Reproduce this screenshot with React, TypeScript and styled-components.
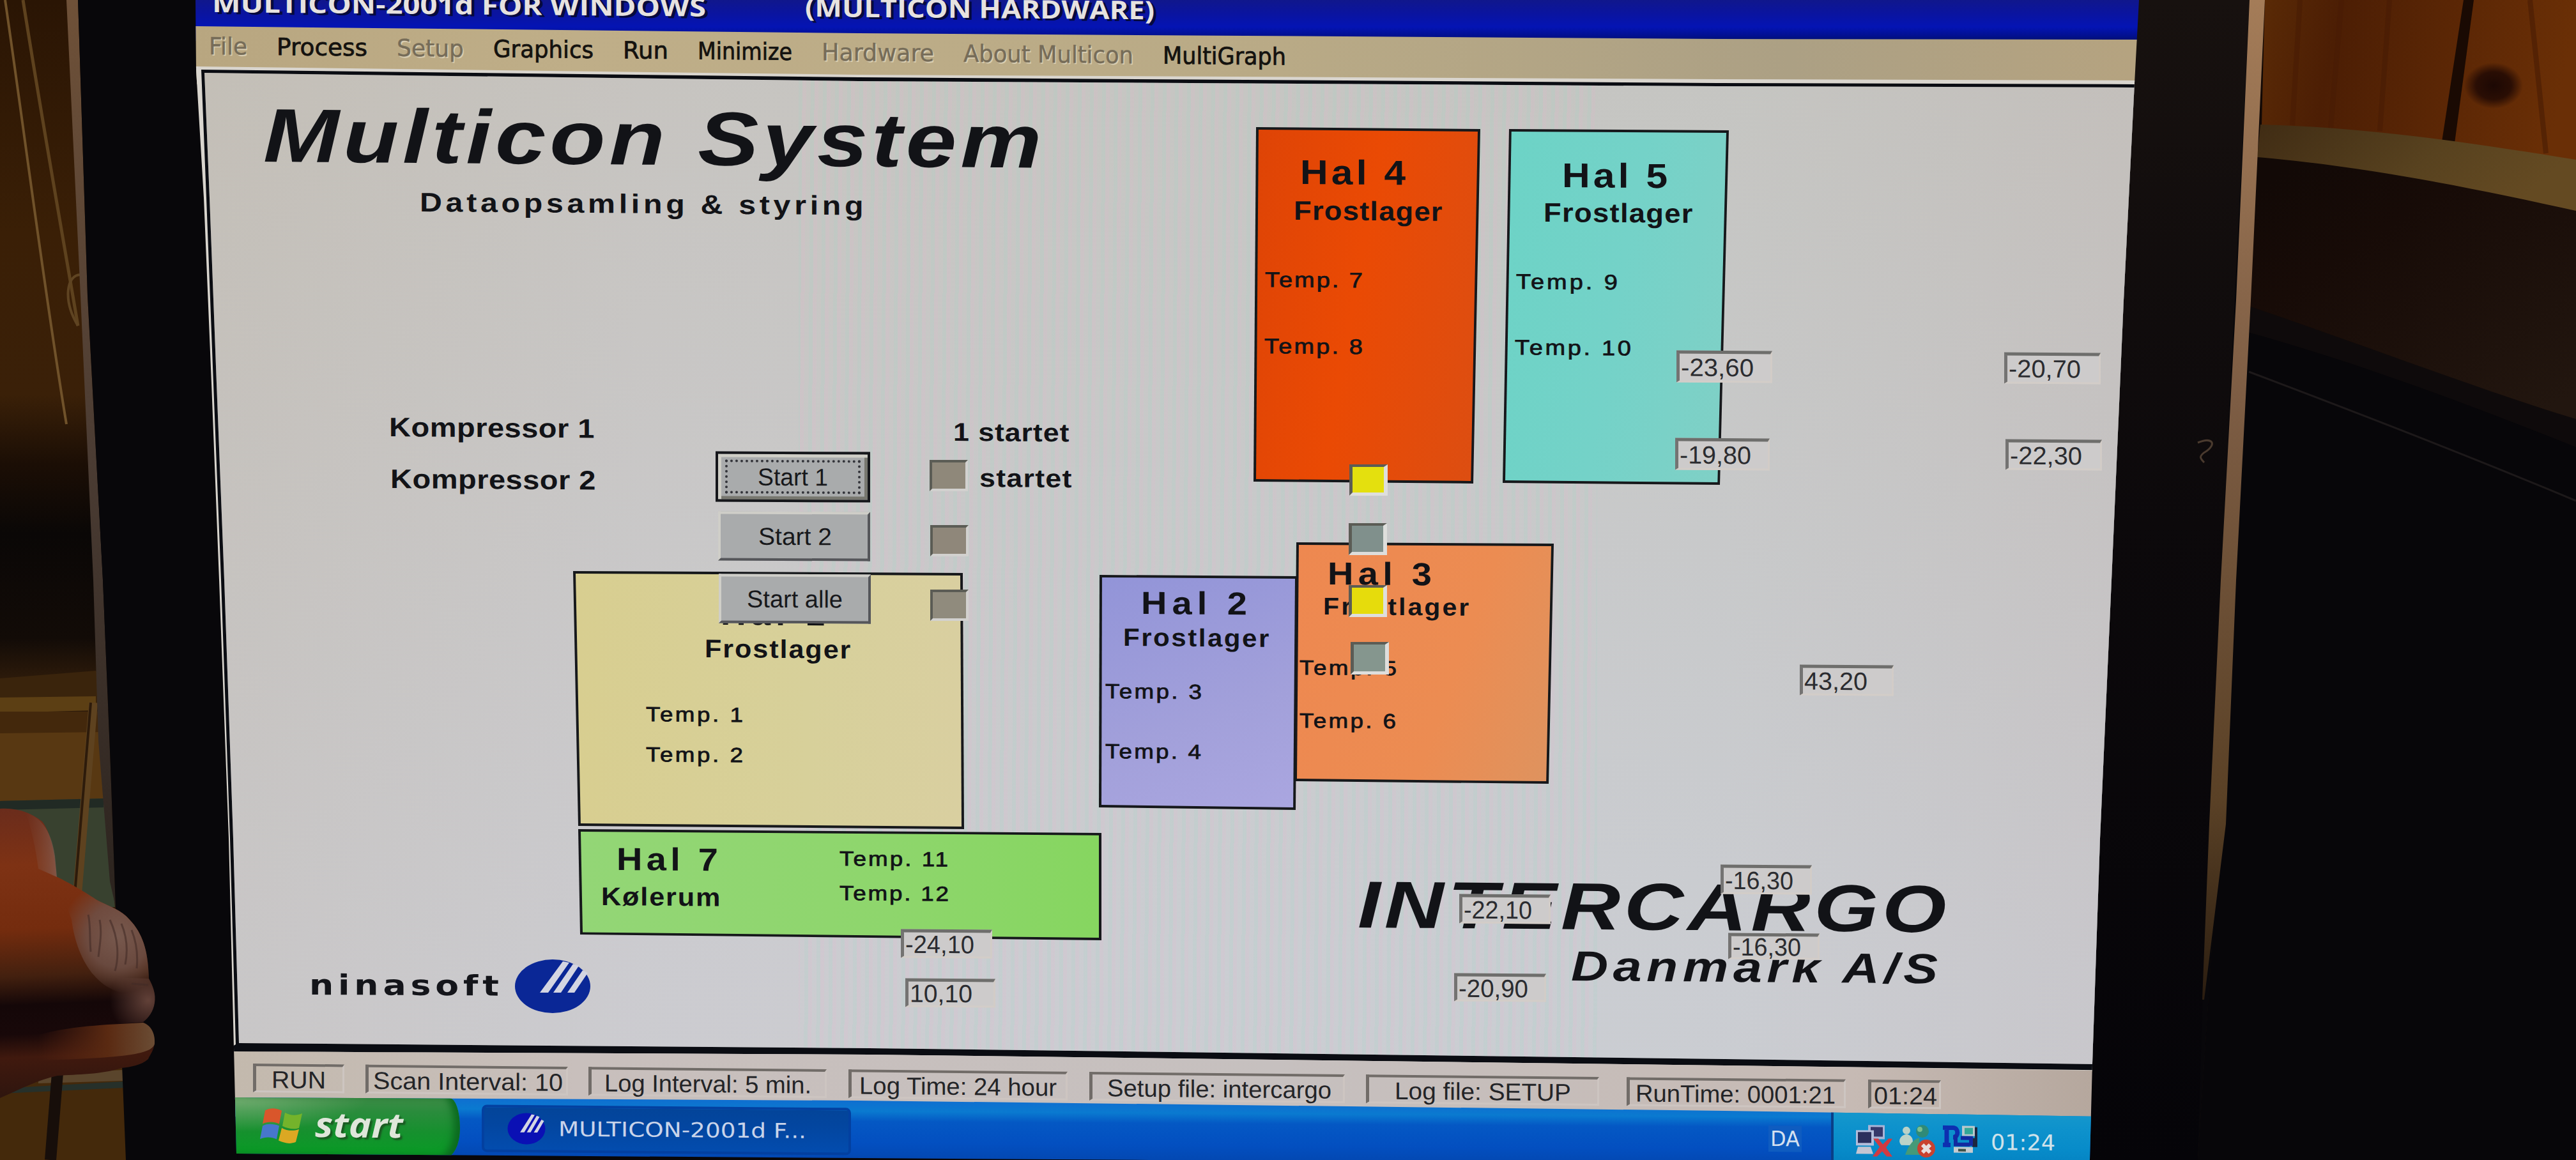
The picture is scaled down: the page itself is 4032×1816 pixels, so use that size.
import React, { useLayoutEffect, useRef, useState } from "react";
import styled, { createGlobalStyle, css } from "styled-components";

const TOP = 100;
const SANS = `"Liberation Sans", Arial, sans-serif`;
const UI = `"DejaVu Sans", Tahoma, sans-serif`;

const GlobalStyle = createGlobalStyle`
  html, body { margin: 0; padding: 0; background: #07060a; overflow: hidden; }
  *, *::before, *::after { box-sizing: border-box; }
`;

const Room = styled.div`
  position: relative;
  width: 4032px;
  height: 1816px;
  overflow: hidden;
  background: #08070a;
  font-family: ${SANS};
`;

const Scene = styled.svg`
  position: absolute;
  left: 0;
  top: 0;
  pointer-events: none;
`;

const Screen = styled.main`
  position: relative;
  display: flex;
  flex-direction: column;
  width: 4032px;
  height: 1816px;
  clip-path: polygon(
    306px 0, 3348px 0, 3341px 130px, 3324px 470px, 3305px 908px, 3287px 1313px, 3275px 1665px, 3271px 1816px,
    1800px 1816px, 1350px 1813px, 370px 1806px, 366px 1640px, 358px 1313px, 343px 908px, 331px 600px, 319px 310px, 307px 110px
  );
`;

/* ---------- fitted text ---------- */

const Slot = styled.span<{ $w: number; $size: number }>`
  display: block;
  flex: none;
  width: ${(p) => p.$w}px;
  height: ${(p) => p.$size}px;
  line-height: 1;
  white-space: nowrap;
`;

const Glyphs = styled.span<{ $size: number; $bold?: boolean; $italic?: boolean; $font?: string; $ink?: number }>`
  display: inline-block;
  font-family: ${(p) => p.$font || SANS};
  font-size: ${(p) => p.$size}px;
  font-weight: ${(p) => (p.$bold ? 700 : 400)};
  font-style: ${(p) => (p.$italic ? "italic" : "normal")};
  line-height: 1;
  white-space: pre;
  transform-origin: 0 85%;
  -webkit-text-stroke: ${(p) => p.$ink || 0}px currentColor;
`;

type FitProps = {
  text: string;
  w: number;
  size: number;
  stretch?: number;
  bold?: boolean;
  italic?: boolean;
  font?: string;
  slope?: number;
  ink?: number;
};

/* Sets a string to an exact width: by tracking when a stretch is given, else by scaling. */
function Fit({ text, w, size, stretch, bold, italic, font, slope = 0, ink }: FitProps) {
  const ref = useRef<HTMLSpanElement>(null);
  const [natural, setNatural] = useState(0);
  useLayoutEffect(() => {
    if (ref.current && !natural) setNatural(ref.current.getBoundingClientRect().width);
  });
  const scale = stretch ?? (natural ? w / natural : 1);
  const spacing = natural && stretch ? (w / stretch - natural) / (text.length - 1) : 0;
  const style = natural
    ? { transform: `skewY(${slope}deg) scaleX(${scale})`, letterSpacing: `${spacing}px` }
    : undefined;
  return (
    <Slot $w={w} $size={size}>
      <Glyphs ref={ref} $size={size} $bold={bold} $italic={italic} $font={font} $ink={ink} style={style}>
        {text}
      </Glyphs>
    </Slot>
  );
}

/* ---------- title and menu ---------- */

const TitleBar = styled.header`
  flex: none;
  display: flex;
  gap: 155px;
  height: 64px;
  padding-left: 332px;
  background: linear-gradient(#10178c 0, #0a14a0 22px, #0414b4 42px, #021090 56px, #02106e 64px);
`;

const TitleText = styled.div<{ $top: number }>`
  margin-top: ${(p) => p.$top}px;
  color: #e6e2e0;
  text-shadow: 4px 3px 0 #050a3c;
`;

const MenuBar = styled.nav`
  flex: none;
  height: 92px;
  margin-top: -24px;
  padding: 14px 0 0 327px;
  background: linear-gradient(90deg, #b8a680 300px, #bfae88 900px, #b9aa86 2000px, #aca084 2800px, #b5a380 3340px);
  clip-path: polygon(0 0, 306px 1px, 1344px 12px, 2688px 21px, 3348px 22px, 3348px 92px, 0 92px);
`;

const MenuRow = styled.div`
  display: flex;
  gap: 46px;
  transform: skewY(0.56deg);
  transform-origin: 0 0;
`;

const MenuItem = styled.div<{ $off?: boolean }>`
  color: ${(p) => (p.$off ? "#766c58" : "#14120f")};
  text-shadow: ${(p) => (p.$off ? "2px 2px 0 #d8cdb2" : "none")};
`;

const menu: [string, number, boolean][] = [
  ["File", 60, true],
  ["Process", 142, false],
  ["Setup", 105, true],
  ["Graphics", 157, false],
  ["Run", 71, false],
  ["Minimize", 148, false],
  ["Hardware", 176, true],
  ["About Multicon", 266, true],
  ["MultiGraph", 193, false],
];

/* ---------- process picture ---------- */

const Workspace = styled.section`
  flex: none;
  position: relative;
  height: 1580px;
  margin-top: -32px;
  background: #d9d5ce;
  clip-path: polygon(
    0 2px, 306px 4px, 1344px 17px, 2688px 24px, 3350px 26px,
    3350px 1578px, 3275px 1577px, 2700px 1569px, 1360px 1552px, 366px 1546px, 0 1546px
  );
`;

const Frame = styled.div`
  position: absolute;
  inset: 0;
  background: #0a0c12;
  clip-path: polygon(
    315px 9px, 1344px 21px, 2688px 30px, 3350px 32px, 3350px 1576px, 2700px 1568px, 1360px 1551px, 364px 1546px, 364px 1538px,
    369px 1535px, 360px 1213px, 346px 808px, 334px 500px, 323px 210px
  );
`;

const Pane = styled.div`
  position: absolute;
  inset: 0;
  background:
    repeating-linear-gradient(90.4deg, rgba(150, 215, 195, 0.13) 0 6px, rgba(235, 175, 205, 0.12) 6px 12px, transparent 12px 19px) 1250px 0 / 1250px 100% no-repeat,
    linear-gradient(180deg, rgba(190, 186, 176, 0.35), rgba(205, 208, 222, 0.35) 90%),
    linear-gradient(90deg, #c6c1ba 330px, #cbc9c8 1000px, #cacccc 1900px, #c9cbcb 2700px, #c6c2c1 3300px);
  clip-path: polygon(
    320px 14px, 1344px 27px, 2688px 35px, 3350px 37px, 3350px 1567px, 2700px 1558px, 1360px 1541px,
    374px 1533px, 365px 1213px, 351px 808px, 339px 500px, 328px 210px
  );
`;

type Pt = [number, number];

const HallShape = styled.div<{ $x: number; $y: number; $w: number; $h: number; $poly: string; $fill: string }>`
  position: absolute;
  left: ${(p) => p.$x}px;
  top: ${(p) => p.$y - TOP}px;
  width: ${(p) => p.$w}px;
  height: ${(p) => p.$h}px;
  background: #16181b;
  clip-path: polygon(${(p) => p.$poly});
  &::before {
    content: "";
    position: absolute;
    inset: 4px;
    background: ${(p) => p.$fill};
    clip-path: polygon(${(p) => p.$poly});
  }
`;

function Hall({ pts, fill }: { pts: Pt[]; fill: string }) {
  const xs = pts.map((p) => p[0]);
  const ys = pts.map((p) => p[1]);
  const x = Math.min(...xs);
  const y = Math.min(...ys);
  const w = Math.max(...xs) - x;
  const h = Math.max(...ys) - y;
  const poly = pts
    .map(([a, b]) => `${(((a - x) / w) * 100).toFixed(2)}% ${(((b - y) / h) * 100).toFixed(2)}%`)
    .join(", ");
  return <HallShape $x={x} $y={y} $w={w} $h={h} $poly={poly} $fill={fill} />;
}

const halls: { pts: Pt[]; fill: string }[] = [
  { pts: [[1966, 199], [2317, 202], [2306, 757], [1962, 754]], fill: "linear-gradient(100deg, #de4406, #ea4a04 45%, #dc4e12)" },
  { pts: [[2362, 202], [2706, 204], [2692, 759], [2352, 756]], fill: "linear-gradient(100deg, #6cd3c6, #74d2c8 50%, #80d0c6)" },
  { pts: [[897, 894], [1507, 897], [1509, 1298], [905, 1293]], fill: "linear-gradient(90deg, #d8ce90, #d7d09a 60%, #d9cfa0)" },
  { pts: [[905, 1298], [1724, 1304], [1724, 1472], [908, 1463]], fill: "linear-gradient(90deg, #93d676, #8ed66c 60%, #86d660)" },
  { pts: [[1721, 900], [2031, 902], [2028, 1268], [1720, 1264]], fill: "linear-gradient(160deg, #9294d8, #a2a0da 60%, #aaa6e0)" },
  { pts: [[2029, 849], [2432, 851], [2424, 1227], [2026, 1223]], fill: "linear-gradient(110deg, #ee8850, #ec8c52 60%, #de935f)" },
];

const Place = styled.div<{ $x: number; $y: number }>`
  position: absolute;
  left: ${(p) => p.$x}px;
  top: ${(p) => p.$y - TOP}px;
  color: #121317;
`;

/* x, baseline, width, size, text, weight, stretch */
type Caption = [number, number, number, number, string, "b" | "n" | "bi", number];

const captions: Caption[] = [
  [418, 255, 1211, 119, "Multicon System", "bi", 1.2],
  [659, 334, 692, 42, "Dataopsamling & styring", "b", 1.15],
  [611, 686, 319, 42, "Kompressor 1", "b", 1.12],
  [613, 767, 319, 42, "Kompressor 2", "b", 1.12],
  [1494, 692, 179, 40, "1 startet", "b", 1.12],
  [1535, 764, 142, 40, "startet", "b", 1.12],
  [2038, 290, 162, 54, "Hal 4", "b", 1.12],
  [2027, 347, 230, 42, "Frostlager", "b", 1.08],
  [1982, 451, 151, 33, "Temp. 7", "n", 1.15],
  [1981, 555, 152, 33, "Temp. 8", "n", 1.15],
  [2448, 295, 162, 54, "Hal 5", "b", 1.12],
  [2418, 350, 231, 42, "Frostlager", "b", 1.08],
  [2375, 454, 157, 33, "Temp. 9", "n", 1.15],
  [2373, 557, 180, 33, "Temp. 10", "n", 1.15],
  [1130, 980, 160, 50, "Hal 1", "b", 1.1],
  [1105, 1031, 226, 40, "Frostlager", "b", 1.08],
  [1013, 1131, 150, 32, "Temp. 1", "n", 1.15],
  [1013, 1194, 150, 32, "Temp. 2", "n", 1.15],
  [967, 1364, 156, 50, "Hal 7", "b", 1.12],
  [943, 1419, 184, 40, "Kølerum", "b", 1.08],
  [1316, 1357, 168, 32, "Temp. 11", "n", 1.15],
  [1316, 1411, 169, 32, "Temp. 12", "n", 1.15],
  [1788, 963, 163, 50, "Hal 2", "b", 1.12],
  [1760, 1013, 226, 39, "Frostlager", "b", 1.08],
  [1732, 1095, 149, 32, "Temp. 3", "n", 1.15],
  [1732, 1189, 148, 32, "Temp. 4", "n", 1.15],
  [2080, 917, 160, 50, "Hal 3", "b", 1.12],
  [2073, 964, 226, 38, "Frostlager", "b", 1.08],
  [2036, 1058, 150, 32, "Temp. 5", "n", 1.15],
  [2036, 1141, 149, 32, "Temp. 6", "n", 1.15],
  [2130, 1454, 915, 104, "INTERCARGO", "bi", 1.24],
  [2462, 1537, 570, 66, "Danmark A/S", "bi", 1.22],
];

function CaptionText({ c }: { c: Caption }) {
  const [x, base, w, size, text, kind, stretch] = c;
  return (
    <Place $x={x - size * 0.05} $y={base - 2 - size * 0.846}>
      <Fit
        text={text}
        w={w + size * 0.06}
        size={size}
        stretch={stretch}
        bold={kind !== "n"}
        italic={kind === "bi"}
        slope={0.45}
        ink={kind === "n" ? 0.8 : 0}
      />
    </Place>
  );
}

const ValueField = styled.output<{ $x: number; $y: number; $w: number; $h: number }>`
  position: absolute;
  left: ${(p) => p.$x}px;
  top: ${(p) => p.$y - TOP}px;
  width: ${(p) => p.$w}px;
  height: ${(p) => p.$h}px;
  display: flex;
  align-items: center;
  padding-left: 2px;
  border: solid;
  border-width: 5px 3px 3px 5px;
  border-color: #6e6e6c #d2ccc7 #d3cdc8 #747372;
  background: #cdcbcb;
  color: #2b2c30;
  transform: skewY(0.4deg);
`;

const values: [number, number, number, number, number, string][] = [
  [2624, 549, 150, 50, 114, "-23,60"],
  [2622, 686, 148, 50, 112, "-19,80"],
  [3137, 552, 151, 49, 113, "-20,70"],
  [3139, 688, 151, 48, 113, "-22,30"],
  [2817, 1041, 147, 48, 99, "43,20"],
  [2693, 1354, 143, 46, 107, "-16,30"],
  [2705, 1461, 143, 41, 107, "-16,30"],
  [2284, 1400, 143, 46, 107, "-22,10"],
  [2276, 1524, 144, 44, 109, "-20,90"],
  [1410, 1455, 143, 45, 108, "-24,10"],
  [1417, 1532, 141, 45, 98, "10,10"],
];

const Lamp = styled.i<{ $x: number; $y: number; $h: number; $c: string; $lit?: boolean }>`
  position: absolute;
  left: ${(p) => p.$x}px;
  top: ${(p) => p.$y - TOP}px;
  width: 60px;
  height: ${(p) => p.$h}px;
  border: 4px solid;
  border-color: #5b5c55 #d2d1cf #d2d1cf #5b5c55;
  background: ${(p) => p.$c};
  ${(p) =>
    p.$lit &&
    css`
      border-width: 4px 6px 5px 5px;
      border-color: #5b5c55 #dededc #dededc #5b5c55;
    `}
`;

const lamps: [number, number, number, string, boolean][] = [
  [1455, 720, 49, "#8f887a", false],
  [1456, 822, 49, "#8f877a", false],
  [1456, 923, 49, "#908b7d", false],
  [2112, 727, 49, "#e4e00e", true],
  [2111, 819, 50, "#80908c", true],
  [2111, 916, 50, "#e6dc0c", true],
  [2114, 1005, 51, "#85968e", true],
];

const PushButton = styled.button<{ $x: number; $y: number; $w: number; $h: number; $focus?: boolean }>`
  position: absolute;
  left: ${(p) => p.$x}px;
  top: ${(p) => p.$y - TOP}px;
  width: ${(p) => p.$w}px;
  height: ${(p) => p.$h}px;
  display: flex;
  align-items: center;
  justify-content: center;
  padding: 0;
  border: 4px solid;
  border-color: #cfcec8 #55565a #55565a #cfcec8;
  border-radius: 0;
  background: #a9abac;
  color: #17181b;
  transform: skewY(0.25deg);
  ${(p) =>
    p.$focus &&
    css`
      border-color: #15161a;
      box-shadow: inset 5px 5px 0 #cfcec6, inset -5px -5px 0 #77776f;
      &::after {
        content: "";
        position: absolute;
        inset: 9px 11px;
        border: 4px dotted #33343a;
      }
    `}
`;

const NinaText = styled.div`
  color: #14151a;
  margin-top: -5px;
`;

const Nina = styled.div`
  position: absolute;
  left: 484px;
  top: ${1501 - TOP}px;
  display: flex;
  align-items: center;
  gap: 24px;
  height: 86px;
`;

const LogoSvg = styled.svg`
  display: block;
  flex: none;
`;

function NinaLogo({ w, h, fill }: { w: number; h: number; fill: string }) {
  return (
    <LogoSvg width={w} height={h} viewBox="0 0 120 86" preserveAspectRatio="none">
      <ellipse cx="60" cy="43" rx="59" ry="42" fill={fill} />
      <g fill="#d3d5e2">
        <path d="M76 4 L86 6 L53 53 L40 53 Z" />
        <path d="M92 8 L101 11 L73 53 L61 53 Z" />
        <path d="M107 18 L115 22 L94 53 L83 53 Z" />
      </g>
    </LogoSvg>
  );
}

/* ---------- status bar ---------- */

const StatusBar = styled.footer`
  flex: none;
  height: 114px;
  margin-top: -46px;
  background: linear-gradient(90deg, #c3b9ad 370px, #c8bfbc 900px, #c6c0bf 2000px, #c6bab4 2900px, #b5a79d 3280px);
  clip-path: polygon(0 12px, 366px 12px, 1360px 17px, 2700px 34px, 3350px 43px, 3350px 114px, 0 114px);
`;

const StatusRow = styled.div`
  display: flex;
  padding: 31px 0 0 396px;
  transform: skewY(0.57deg);
  transform-origin: 396px 0;
`;

const StatusCell = styled.div<{ $w: number; $gap: number; $pad: number }>`
  flex: none;
  width: ${(p) => p.$w}px;
  height: 45px;
  margin-right: ${(p) => p.$gap}px;
  padding: 2px 0 0 ${(p) => p.$pad - 5}px;
  border: solid;
  border-width: 4px 3px 3px 5px;
  border-color: #716c68 #cdc5c1 #cdc5c1 #716c68;
  color: #232427;
`;

/* width, gap after, inset of the text, text width */
const cells: [string, number, number, number, number][] = [
  ["RUN", 143, 33, 29, 85],
  ["Scan Interval: 10", 317, 32, 12, 297],
  ["Log Interval: 5 min.", 373, 34, 25, 324],
  ["Log Time: 24 hour", 343, 34, 17, 309],
  ["Setup file: intercargo", 400, 33, 28, 351],
  ["Log file: SETUP", 365, 43, 45, 276],
  ["RunTime: 0001:21", 343, 35, 14, 313],
  ["01:24", 114, 0, 9, 99],
];

/* ---------- taskbar ---------- */

const Taskbar = styled.div`
  flex: none;
  height: 132px;
  margin-top: -32px;
  background: linear-gradient(180.35deg, #0f6fd0 24px, #0a7ad0 40px, #0458c4 56px, #034fc0 90px, #0345ac 124px);
  clip-path: polygon(0 2px, 366px 2px, 1344px 7px, 2700px 23px, 3350px 33px, 3350px 132px, 0 132px);
`;

const TaskRow = styled.div`
  display: flex;
  align-items: flex-start;
  height: 132px;
  padding-left: 366px;
  transform: skewY(0.5deg);
  transform-origin: 366px 0;
`;

const StartButton = styled.div`
  flex: none;
  display: flex;
  align-items: flex-start;
  gap: 20px;
  width: 354px;
  height: 94px;
  padding: 18px 0 0 41px;
  border-radius: 0 16px 24px 0 / 0 46px 46px 0;
  background:
    radial-gradient(ellipse at 0 0, rgba(190, 215, 170, 0.45), transparent 42%),
    linear-gradient(#3f8c48 0, #2a8c3c 22px, #16902e 54px, #0a9a26 86px);
  box-shadow: inset -10px -2px 12px #0c6a20;
  color: #dfe6da;
  text-shadow: 3px 3px 2px #1a5a22;
`;

const StartText = styled.div`
  margin-top: -3px;
`;

const TaskButton = styled.div`
  flex: none;
  display: flex;
  align-items: flex-start;
  gap: 20px;
  width: 578px;
  height: 74px;
  margin: 10px 0 0 34px;
  padding: 8px 0 0 36px;
  border: 4px solid #0340a0;
  border-radius: 8px;
  background: linear-gradient(#034499, #0346a0 40%, #034cae);
  color: #c9d4ea;
`;

const TaskLabel = styled.div`
  margin-top: 9px;
`;

const Language = styled.div`
  flex: none;
  margin: 25px 0 0 1436px;
  padding: 4px 0 4px 3px;
  width: 52px;
  background: #0f5cc0;
  color: #d5e0f0;
`;

const Tray = styled.div`
  flex: none;
  display: flex;
  align-items: flex-start;
  gap: 9px;
  width: 480px;
  height: 132px;
  margin-left: 46px;
  padding: 22px 0 0 34px;
  border-left: 4px solid #0a3f88;
  background: linear-gradient(#1698cc, #0e92cc 26px, #078bc9 60px, #0480c0 90px);
  color: #cfe2ea;
`;

const Clock = styled.div`
  margin: 9px 0 0 12px;
`;

function WindowsFlag() {
  return (
    <LogoSvg width="66" height="56" viewBox="0 0 66 56">
      <path d="M8 4 C16 -1 26 0 34 4 L30 25 C22 21 12 21 4 25 Z" fill="#d9562b" />
      <path d="M39 7 C48 12 57 12 66 8 L61 31 C53 34 43 32 35 28 Z" fill="#74b32b" />
      <path d="M4 28 C12 24 22 25 30 28 L26 49 C18 45 8 45 0 49 Z" fill="#4777cc" />
      <path d="M34 31 C43 36 52 36 61 33 L56 53 C47 57 38 55 29 51 Z" fill="#dba823" />
    </LogoSvg>
  );
}

function NetworkIcon() {
  return (
    <LogoSvg width="59" height="52" viewBox="0 0 59 52">
      <rect x="20" y="1" width="26" height="22" fill="#a9b4d6" />
      <rect x="24" y="4" width="19" height="15" fill="#36386a" />
      <rect x="1" y="9" width="28" height="24" fill="#b3bddb" />
      <rect x="4" y="12" width="21" height="17" fill="#2c2f5c" />
      <path d="M4 35 H24 L28 46 H1 Z" fill="#c3c5d2" />
      <path d="M28 22 L36 22 L43 31 L52 22 L58 22 L48 36 L58 50 L49 50 L42 42 L34 50 L27 50 L38 35 Z" fill="#d13a42" />
    </LogoSvg>
  );
}

function MessengerIcon() {
  return (
    <LogoSvg width="60" height="52" viewBox="0 0 60 52">
      <circle cx="12" cy="9" r="6" fill="#b9d2c8" />
      <path d="M12 15 C22 16 24 26 20 32 L4 32 C-2 26 2 16 12 15 Z" fill="#bcd3c8" />
      <circle cx="37" cy="10" r="10" fill="#2f8a78" />
      <circle cx="33" cy="7" r="4" fill="#7cbf90" />
      <path d="M32 20 C20 24 14 36 10 47 H34 Z" fill="#459a78" />
      <circle cx="43" cy="37" r="14" fill="#c9412f" />
      <path d="M37 31 L49 43 M49 31 L37 43" stroke="#e8dcdc" strokeWidth="6" />
    </LogoSvg>
  );
}

function RemoteIcon() {
  return (
    <LogoSvg width="54" height="46" viewBox="0 0 54 46">
      <path d="M0 4 H16 C25 4 25 19 16 19 M6 4 V32 M0 31 H12" fill="none" stroke="#0d2fb0" strokeWidth="7" />
      <rect x="30" y="1" width="20" height="16" fill="#b8c8cc" />
      <rect x="34" y="4" width="13" height="10" fill="#32a898" />
      <path d="M50 3 H54 V34 H46 V20 H50 Z" fill="#1c2740" />
      <path d="M20 15 V30 H42 M28 20 H44 V32" fill="none" stroke="#1229a0" strokeWidth="6" />
      <rect x="17" y="34" width="30" height="9" fill="#c5cbd0" />
      <rect x="24" y="37" width="12" height="4" fill="#3c5148" />
    </LogoSvg>
  );
}

/* ---------- surroundings ---------- */

function Surroundings() {
  return (
    <Scene width="4032" height="1816" viewBox="0 0 4032 1816">
      <defs>
        <linearGradient id="wallL" x1="0" y1="0" x2="0" y2="1">
          <stop offset="0" stopColor="#2a1504" />
          <stop offset="0.2" stopColor="#3a1f06" />
          <stop offset="0.34" stopColor="#3a2008" />
          <stop offset="0.4" stopColor="#1b0e05" />
          <stop offset="0.46" stopColor="#0a0706" />
          <stop offset="0.55" stopColor="#120b07" />
          <stop offset="0.585" stopColor="#2c1a0a" />
        </linearGradient>
        <linearGradient id="wood" x1="0" y1="0" x2="1" y2="0.1">
          <stop offset="0" stopColor="#5a2a06" />
          <stop offset="0.25" stopColor="#4c1e04" />
          <stop offset="0.6" stopColor="#5a2605" />
          <stop offset="1" stopColor="#6a2f06" />
        </linearGradient>
        <radialGradient id="knot">
          <stop offset="0" stopColor="#1c0804" />
          <stop offset="0.6" stopColor="#2a0e04" />
          <stop offset="1" stopColor="#2a0e04" stopOpacity="0" />
        </radialGradient>
        <linearGradient id="shadowR" gradientUnits="userSpaceOnUse" x1="3600" y1="250" x2="3900" y2="700">
          <stop offset="0" stopColor="#120906" />
          <stop offset="0.3" stopColor="#170b07" />
          <stop offset="1" stopColor="#22160f" />
        </linearGradient>
        <linearGradient id="ledge" x1="0" y1="0" x2="1" y2="0.3">
          <stop offset="0" stopColor="#402c14" />
          <stop offset="0.6" stopColor="#58421f" />
          <stop offset="1" stopColor="#644a22" />
        </linearGradient>
        <linearGradient id="rimR" x1="0" y1="0" x2="0" y2="1">
          <stop offset="0" stopColor="#a47c58" />
          <stop offset="0.4" stopColor="#7d5d44" />
          <stop offset="0.8" stopColor="#5a4126" />
          <stop offset="1" stopColor="#2b1d10" />
        </linearGradient>
        <linearGradient id="rimL" x1="0" y1="0" x2="0" y2="1">
          <stop offset="0" stopColor="#6f5138" />
          <stop offset="0.5" stopColor="#4b3c33" />
          <stop offset="1" stopColor="#2b231e" />
        </linearGradient>
        <linearGradient id="skin" gradientUnits="userSpaceOnUse" x1="0" y1="1265" x2="20" y2="1720">
          <stop offset="0" stopColor="#6a2c1c" />
          <stop offset="0.2" stopColor="#7e3214" />
          <stop offset="0.42" stopColor="#742c0e" />
          <stop offset="0.58" stopColor="#43200f" />
          <stop offset="0.68" stopColor="#140708" />
          <stop offset="0.78" stopColor="#180809" />
          <stop offset="0.86" stopColor="#40190e" />
          <stop offset="1" stopColor="#2e150e" />
        </linearGradient>
        <radialGradient id="finger" gradientUnits="userSpaceOnUse" cx="185" cy="1465" r="90">
          <stop offset="0" stopColor="#77594e" />
          <stop offset="0.55" stopColor="#6e5047" stopOpacity="0.85" />
          <stop offset="1" stopColor="#6e5047" stopOpacity="0" />
        </radialGradient>
        <radialGradient id="tip" gradientUnits="userSpaceOnUse" cx="232" cy="1566" r="60">
          <stop offset="0" stopColor="#624138" />
          <stop offset="1" stopColor="#624138" stopOpacity="0" />
        </radialGradient>
        <linearGradient id="lowerFinger" gradientUnits="userSpaceOnUse" x1="60" y1="0" x2="242" y2="0">
          <stop offset="0" stopColor="#5a2410" stopOpacity="0" />
          <stop offset="0.6" stopColor="#5a2a12" />
          <stop offset="1" stopColor="#6a4c34" />
        </linearGradient>
        <linearGradient id="knuckle" gradientUnits="userSpaceOnUse" x1="40" y1="0" x2="90" y2="0">
          <stop offset="0" stopColor="#7c5040" stopOpacity="0" />
          <stop offset="1" stopColor="#86655c" />
        </linearGradient>
        <linearGradient id="bezelR" x1="0" y1="0" x2="0" y2="1">
          <stop offset="0" stopColor="#17110f" />
          <stop offset="0.45" stopColor="#0c090b" />
          <stop offset="1" stopColor="#050408" />
        </linearGradient>
      </defs>
      <rect width="200" height="1816" fill="url(#wallL)" />
      <path d="M0 1062 L150 1050 L170 1090 L170 1110 L0 1112 Z" fill="#3a240c" />
      <path d="M0 1092 L150 1090 L150 1112 L0 1116 Z" fill="#5c3f14" />
      <rect y="1114" width="165" height="34" fill="#43280c" />
      <path d="M0 1148 L160 1146 L165 1252 L0 1254 Z" fill="#583812" />
      <path d="M0 1254 L162 1250 L180 1420 L0 1420 Z" fill="#38412f" />
      <path d="M0 1254 L162 1250 L162 1264 L0 1268 Z" fill="#212a24" />
      <rect y="1670" width="198" height="146" fill="#44290b" />
      <path d="M60 1682 L192 1675 L193 1692 L60 1696 Z" fill="#5a452c" />
      <path d="M0 1704 L193 1693 L193 1703 L0 1712 Z" fill="#26302a" />
      <path d="M8 0 C40 220 70 460 104 664" stroke="#70522a" strokeWidth="4" fill="none" />
      <path d="M36 0 C66 190 100 380 122 510" stroke="#5e421e" strokeWidth="5" fill="none" />
      <path d="M122 510 C98 470 104 430 126 430" stroke="#5f4422" strokeWidth="4" fill="none" />
      <path d="M146 1100 L121 1400" stroke="#5e421f" strokeWidth="14" fill="none" />
      <path d="M142 1100 L117 1400" stroke="#2d1b0b" strokeWidth="4" fill="none" />
      <path d="M90 1680 L79 1816" stroke="#170e0a" strokeWidth="18" fill="none" />
      <path d="M104 0 L122 0 L137 463 L161 908 L173 1200 L181 1420 L172 1380 L154 1160 L146 908 L126 463 Z" fill="url(#rimL)" />
      <path d="M122 0 L310 0 L310 110 L325 310 L350 908 L372 1816 L197 1816 L181 1420 L173 1200 L161 908 L137 463 Z" fill="#08070a" />
      <path d="M3340 0 H3521 L3476 908 L3448 1560 L3440 1816 H3265 Z" fill="url(#bezelR)" />
      <path d="M3545 0 H4032 V1816 H3440 L3500 908 Z" fill="url(#shadowR)" />
      <path d="M3545 0 H4032 V256 L3830 224 L3540 196 Z" fill="url(#wood)" />
      <path d="M3856 0 L3872 0 L3842 224 L3822 222 Z" fill="#1a0a03" />
      <path d="M3600 0 L3588 196 M3665 0 L3648 200 M3740 0 L3725 205 M3960 0 L3985 240" stroke="#491c04" strokeWidth="8" opacity="0.6" />
      <ellipse cx="3903" cy="134" rx="46" ry="36" fill="url(#knot)" />
      <path d="M3538 195 C3720 200 3880 226 4032 250 V330 C3880 296 3700 260 3533 246 Z" fill="url(#ledge)" />
      <path d="M3522 480 C3700 540 3880 610 4032 656 V1816 H3440 L3500 908 Z" fill="#0e0a0b" />
      <path d="M3518 520 C3700 570 3880 640 4032 700 V1816 H3440 L3500 908 Z" fill="#070609" />
      <path d="M3520 582 C3700 650 3880 720 4032 784" stroke="#1d191a" strokeWidth="3" fill="none" />
      <path d="M3521 0 L3545 0 L3523 470 L3500 908 L3484 1290 L3450 1565 L3447 1565 L3458 1290 L3476 908 L3500 470 Z" fill="url(#rimR)" />
      <path d="M3440 693 C3462 684 3470 694 3454 706 C3440 714 3444 718 3450 724" stroke="#4a3a2e" strokeWidth="3" fill="none" />
      <path
        d="M0 1266 C26 1264 48 1272 66 1286 C80 1304 87 1340 88 1372 C100 1378 130 1394 150 1408 C172 1420 190 1424 203 1440 C224 1462 232 1490 233 1532 C240 1545 244 1556 242 1570 C240 1584 232 1594 224 1600 C238 1606 243 1620 242 1634 C240 1646 234 1652 232 1658 C220 1668 206 1670 190 1672 C160 1682 120 1682 90 1684 C60 1690 30 1706 0 1719 Z"
        fill="url(#skin)"
      />
      <path d="M40 1272 C60 1278 80 1296 86 1340 L89 1373 L60 1360 C56 1330 50 1300 40 1272 Z" fill="url(#knuckle)" opacity="0.7" />
      <path
        d="M88 1372 C100 1378 130 1394 150 1408 C172 1420 190 1424 203 1440 C224 1462 232 1490 233 1532 C236 1545 230 1560 200 1556 C150 1550 120 1500 112 1440 Z"
        fill="url(#finger)"
      />
      <path d="M233 1532 C240 1545 244 1556 242 1570 C240 1584 232 1594 224 1600 L170 1604 L170 1530 Z" fill="url(#tip)" />
      <path d="M60 1620 C120 1604 180 1604 224 1601 C238 1606 243 1620 242 1634 C238 1650 200 1656 60 1660 Z" fill="url(#lowerFinger)" />
      <path
        d="M138 1432 C142 1446 140 1470 142 1490 M156 1440 C160 1460 156 1480 154 1498 M172 1440 C186 1470 186 1500 180 1520 M190 1446 C200 1470 200 1490 196 1510 M206 1456 C214 1476 216 1496 214 1516 M206 1540 L232 1542"
        stroke="#432c26"
        strokeWidth="3"
        opacity="0.6"
        fill="none"
      />
    </Scene>
  );
}

export default function App() {
  return (
    <Room>
      <GlobalStyle />
      <Surroundings />
      <Screen>
        <TitleBar>
          <TitleText $top={-16}>
            <Fit text="MULTICON-2001d FOR WINDOWS" w={773} size={40} bold font={`"Open Sans", ${UI}`} slope={0.5} />
          </TitleText>
          <TitleText $top={-9}>
            <Fit text="(MULTICON HARDWARE)" w={547} size={40} bold font={`"Open Sans", ${UI}`} slope={0.45} />
          </TitleText>
        </TitleBar>
        <MenuBar>
          <MenuRow>
            {menu.map(([label, w, off]) => (
              <MenuItem key={label} $off={off}>
                <Fit text={label} w={w} size={37} font={UI} ink={off ? 0.4 : 0.8} />
              </MenuItem>
            ))}
          </MenuRow>
        </MenuBar>

        <Workspace>
          <Frame />
          <Pane />
          {halls.map((h, i) => (
            <Hall key={i} {...h} />
          ))}
          {captions.map((c, i) => (
            <CaptionText key={i} c={c} />
          ))}
          {lamps.map(([x, y, h, c, lit], i) => (
            <Lamp key={i} $x={x} $y={y} $h={h} $c={c} $lit={lit} />
          ))}
          <PushButton $x={1120} $y={707} $w={242} $h={79} $focus>
            <Fit text="Start 1" w={110} size={38} />
          </PushButton>
          <PushButton $x={1124} $y={801} $w={238} $h={77}>
            <Fit text="Start 2" w={115} size={38} />
          </PushButton>
          <PushButton $x={1125} $y={899} $w={238} $h={77}>
            <Fit text="Start alle" w={150} size={38} />
          </PushButton>
          {values.map(([x, y, w, h, tw, text], i) => (
            <ValueField key={i} $x={x} $y={y} $w={w} $h={h}>
              <Fit text={text} w={tw} size={39} />
            </ValueField>
          ))}
          <Nina>
            <NinaText>
              <Fit text="ninasoft" w={297} size={44} stretch={1.22} bold font={UI} slope={0.3} />
            </NinaText>
            <NinaLogo w={120} h={86} fill="#0a2796" />
          </Nina>
        </Workspace>

        <StatusBar>
          <StatusRow>
            {cells.map(([text, w, gap, pad, tw]) => (
              <StatusCell key={text} $w={w} $gap={gap} $pad={pad}>
                <Fit text={text} w={tw} size={38} />
              </StatusCell>
            ))}
          </StatusRow>
        </StatusBar>

        <Taskbar>
          <TaskRow>
            <StartButton>
              <WindowsFlag />
              <StartText>
                <Fit text="start" w={138} size={54} bold italic font={`"Open Sans", ${UI}`} />
              </StartText>
            </StartButton>
            <TaskButton>
              <NinaLogo w={60} h={50} fill="#0a10b4" />
              <TaskLabel>
                <Fit text="MULTICON-2001d F..." w={388} size={32} font={UI} />
              </TaskLabel>
            </TaskButton>
            <Language>
              <Fit text="DA" w={46} size={33} font={UI} />
            </Language>
            <Tray>
              <NetworkIcon />
              <MessengerIcon />
              <RemoteIcon />
              <Clock>
                <Fit text="01:24" w={101} size={34} font={UI} />
              </Clock>
            </Tray>
          </TaskRow>
        </Taskbar>
      </Screen>
    </Room>
  );
}
